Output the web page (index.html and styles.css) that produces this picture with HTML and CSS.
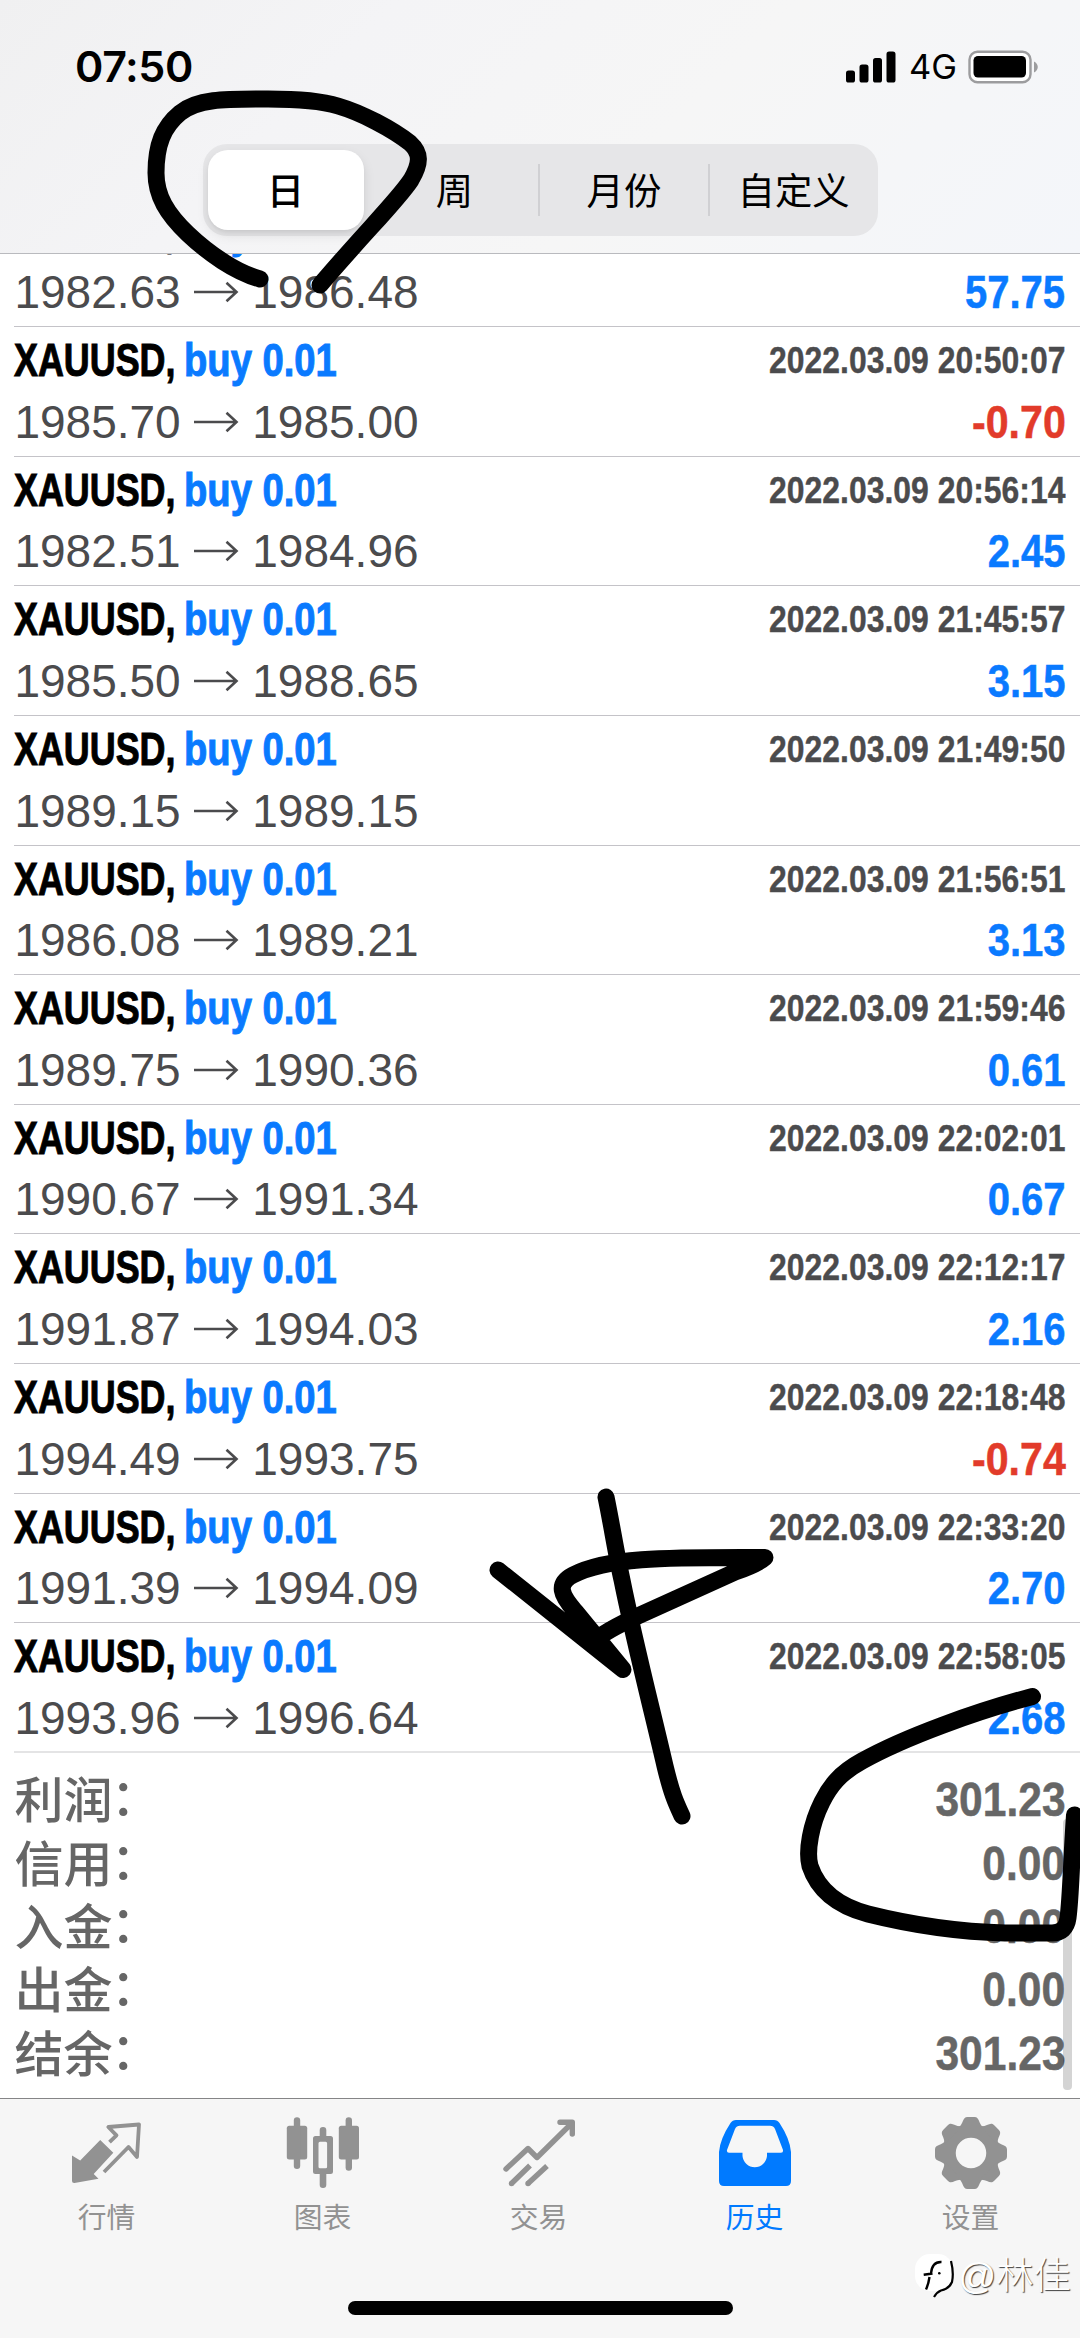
FILE: index.html
```html
<!DOCTYPE html>
<html lang="zh-CN">
<head>
<meta charset="utf-8">
<title>历史</title>
<link rel="stylesheet" href="styles.css">
</head>
<body>
<div class="phone">
  <header class="header">
    <div class="status">
      <span class="clock">07:50</span>
      <div class="status-right">
        <svg class="signal" width="50" height="32" viewBox="0 0 50 32"><rect x="0" y="19.5" width="9" height="12" rx="2.6"/><rect x="13.5" y="13.5" width="9" height="18" rx="2.6"/><rect x="27" y="7" width="9" height="24.500" rx="2.600"/><rect x="40.500" y="0.500" width="9" height="31" rx="2.600"/></svg>
        <span class="network">4G</span>
        <svg class="battery" width="72" height="34" viewBox="0 0 72 34"><rect x="1.500" y="1.800" width="61" height="30.400" rx="8" fill="#fff" stroke="#9c9c9e" stroke-width="2.400"/><rect x="5.500" y="6" width="52.500" height="21.500" rx="4.500"/><path d="M66 11.500c5 2.500 5 8.500 0 11z" fill="#9c9c9e"/></svg>
      </div>
    </div>
    <nav class="segments">
      <span class="segment active">日</span>
      <span class="segment">周</span>
      <span class="segment divided">月份</span>
      <span class="segment divided">自定义</span>
    </nav>
  </header>

  <main class="content">
    <ul class="deals" id="deals"></ul>
    <dl class="summary">
      <div class="sum"><dt>利润<i>：</i></dt><dd>301.23</dd></div>
      <div class="sum"><dt>信用<i>：</i></dt><dd>0.00</dd></div>
      <div class="sum"><dt>入金<i>：</i></dt><dd>0.00</dd></div>
      <div class="sum"><dt>出金<i>：</i></dt><dd>0.00</dd></div>
      <div class="sum"><dt>结余<i>：</i></dt><dd>301.23</dd></div>
    </dl>
    <div class="scrollbar"></div>
  </main>

  <footer class="tabbar">
    <div class="tab">
      <svg width="80" height="80" viewBox="0 0 80 80"><path d="M4 40.500L12.200 45.500 32.200 25 45.300 37.700 25.700 59 30.500 63.700 6.500 68Q4 68.200 4 66z" fill="currentColor"/><path d="M41.500 27.200L48.500 20.300 40.300 12 71 9.500 69 42 60.500 32 36 57" fill="none" stroke="currentColor" stroke-width="3.800" stroke-linejoin="round"/></svg>
      <span>行情</span>
    </div>
    <div class="tab">
      <svg width="80" height="80" viewBox="0 0 80 80"><g fill="currentColor"><rect x="2.800" y="10.700" width="20.400" height="33.800" rx="2.500"/><rect x="9.800" y="2.300" width="6.400" height="51.700" rx="3.200"/><rect x="54.800" y="10.700" width="20.200" height="33.800" rx="2.500"/><rect x="61.600" y="2.300" width="6.400" height="53.400" rx="3.200"/><rect x="35.700" y="12" width="6.600" height="14" rx="3.200"/><rect x="35.700" y="54" width="6.600" height="19" rx="3.200"/><path fill-rule="evenodd" d="M31.500 21h15a2.500 2.500 0 0 1 2.500 2.500v33a2.500 2.500 0 0 1-2.500 2.500h-15a2.500 2.500 0 0 1-2.500-2.500v-33a2.500 2.500 0 0 1 2.500-2.500zM36 26.700q-1.500 0-1.500 1.500v23.600q0 1.500 1.500 1.500h5.600q1.500 0 1.500-1.500V28.200q0-1.500-1.500-1.500z"/></g></svg>
      <span>图表</span>
    </div>
    <div class="tab">
      <svg width="80" height="80" viewBox="0 0 80 80" fill="none" stroke="currentColor" stroke-width="5.400" stroke-linejoin="round"><path d="M6 54L28 33.500 37 42.500 71 9M60 7.300H72.300V19" stroke-linecap="round"/><path d="M11.500 68.500L30 50.500M28 68.500L47 51"/><circle cx="11.500" cy="68.500" r="2.700" fill="currentColor" stroke="none"/><circle cx="28" cy="68.500" r="2.700" fill="currentColor" stroke="none"/></svg>
      <span>交易</span>
    </div>
    <div class="tab current">
      <svg width="80" height="80" viewBox="0 0 80 80"><path fill="currentColor" fill-rule="evenodd" d="M20 5H58Q61.500 5 63.500 8Q74 24 75 37V66Q75 71 70 71H8Q3 71 3 66V37Q4 24 14.500 8Q16.500 5 20 5zM24 10.700Q20.500 10.700 19 14L11 35Q10.500 37.700 13 37.700H26.500V41A12.300 12.300 0 0 0 51 41V37.700H65Q67.500 37.700 67 35L59 14Q57.500 10.700 54 10.700z"/></svg>
      <span>历史</span>
    </div>
    <div class="tab">
      <svg width="80" height="80" viewBox="-39 -38 80 80" fill="currentColor"><defs><path id="tooth" d="M-13 -25C-7 -29-9 -36-3.500 -36H3.500C9 -36 7 -29 13 -25z"/></defs><circle r="22" fill="none" stroke="currentColor" stroke-width="13.500"/><use href="#tooth"/><use href="#tooth" transform="rotate(45)"/><use href="#tooth" transform="rotate(90)"/><use href="#tooth" transform="rotate(135)"/><use href="#tooth" transform="rotate(180)"/><use href="#tooth" transform="rotate(225)"/><use href="#tooth" transform="rotate(270)"/><use href="#tooth" transform="rotate(315)"/></svg>
      <span>设置</span>
    </div>
  </footer>
  <div class="home"></div>

  <div class="watermark">
    <svg width="42" height="50" viewBox="0 0 42 50"><rect x="1" y="3" width="38" height="37" rx="15" fill="#fff"/><path d="M27.500 11Q18 10.500 17 22.500M9.700 23.800L18.500 22.500M15.500 26Q14.500 33 12 38.500" fill="none" stroke="#000" stroke-width="2.400"/><path d="M37 10Q40 22 38 31Q35 38 27 39.500Q23 41 20 46" fill="none" stroke="#000" stroke-width="2.200"/><circle cx="25.300" cy="22.300" r="1.300"/></svg>
    <span>@林佳</span>
  </div>

  <svg class="ink" width="1080" height="2338" viewBox="0 0 1080 2338">
    <path d="M260 279C235 272 208 253 188 234C167 214 156 196 156 173C156 145 163 127 180 113C197 99 222 99 268 99C300 99 322 101 338 106C362 113 392 129 410 143C421 153 421 163 411 180C398 200 365 232 320 285"/>
    <path d="M606 1497C612 1526 616 1553 622 1580C634 1640 652 1710 665 1766C672 1795 676 1803 682 1816"/>
    <path d="M498 1570L623 1669.500L575 1611C561 1595 556 1584 573 1575C605 1558 660 1557 765 1557.500Q758 1564 735 1572L640 1615C620 1624 602 1633 592 1643"/>
    <path d="M1032.500 1696.500C977 1711 905 1737 862 1761C840 1773 830 1786 822 1802C811 1824 806 1851 810 1866C818 1890 838 1906 868 1914C916 1926 965 1932 1005 1933H1052Q1066 1933 1068 1918C1071 1895 1071 1865 1074.500 1815"/>
  </svg>
</div>
<script src="deals.js"></script>
</body>
</html>
```
FILE: deals.js
```js
const deals = [
  ["1982.63", "1986.48", "", "57.75"],
  ["1985.70", "1985.00", "2022.03.09 20:50:07", "-0.70"],
  ["1982.51", "1984.96", "2022.03.09 20:56:14", "2.45"],
  ["1985.50", "1988.65", "2022.03.09 21:45:57", "3.15"],
  ["1989.15", "1989.15", "2022.03.09 21:49:50", ""],
  ["1986.08", "1989.21", "2022.03.09 21:56:51", "3.13"],
  ["1989.75", "1990.36", "2022.03.09 21:59:46", "0.61"],
  ["1990.67", "1991.34", "2022.03.09 22:02:01", "0.67"],
  ["1991.87", "1994.03", "2022.03.09 22:12:17", "2.16"],
  ["1994.49", "1993.75", "2022.03.09 22:18:48", "-0.74"],
  ["1991.39", "1994.09", "2022.03.09 22:33:20", "2.70"],
  ["1993.96", "1996.64", "2022.03.09 22:58:05", "2.68"]
];
document.getElementById("deals").innerHTML = deals.map(([open, close, time, profit]) => `
  <li class="deal">
    <div class="line head">
      <div class="title"><span class="symbol">XAUUSD,</span><span class="side">buy 0.01</span></div>
      <time class="time">${time}</time>
    </div>
    <div class="line">
      <div class="prices"><span>${open}</span><svg class="arrow" width="46" height="22" viewBox="0 0 46 22"><path d="M1 11H43.500M33.500 1.800L43.500 11L33.500 20.200"/></svg><span>${close}</span></div>
      <span class="profit${profit.startsWith("-") ? " loss" : ""}">${profit}</span>
    </div>
  </li>`).join("");
```
FILE: styles.css
```css
* { box-sizing: border-box; }

body {
  margin: 0;
  background: #fff;
  font-family: "Liberation Sans", "Noto Sans CJK SC", sans-serif;
}

.phone {
  position: relative;
  width: 1080px;
  height: 2338px;
  overflow: hidden;
  display: flex;
  flex-direction: column;
}

.header {
  position: relative;
  z-index: 1;
  flex: none;
  height: 254px;
  border-bottom: 1px solid #b9babe;
  background: linear-gradient(135deg, #f0f0f1 0%, #f4f4f6 30%, #f6f6f6 60%, #f4f6fa 100%);
}

.status {
  height: 144px;
  padding: 38px 40px 0 75px;
  display: flex;
  justify-content: space-between;
  font-family: Inter, sans-serif;
}

.clock {
  font-size: 43px;
  font-weight: 600;
  line-height: 56px;
  letter-spacing: -0.4px;
}

.status-right {
  display: flex;
  height: 57px;
  align-items: center;
}

.network {
  margin: 0 11px 0 13px;
  font-size: 34.500px;
  font-weight: 400;
  line-height: 40px;
}

.segments {
  width: 675px;
  height: 92px;
  margin-left: 202.500px;
  padding: 6px 0 6px 5px;
  display: flex;
  align-items: center;
  border-radius: 24px;
  background: #e6e6e8;
}

.segment {
  flex: 1;
  height: 52px;
  display: flex;
  align-items: center;
  justify-content: center;
  padding-bottom: 2px;
  font: 400 37.400px/52px "Noto Sans CJK SC", sans-serif;
  color: #000;
}

.segment.divided { border-left: 2px solid #d0d0d3; }

.segment.active {
  flex: none;
  width: 156px;
  height: 80px;
  margin-right: 7px;
  border-radius: 20px;
  background: #fff;
  font-weight: 500;
  box-shadow: 0 5px 12px rgba(0, 0, 0, .1), 0 2px 3px rgba(0, 0, 0, .04);
}

.content {
  position: relative;
  height: 1844px;
  flex: none;
}

.deals {
  margin: -56.300px 0 0;
  padding: 0;
  list-style: none;
}

.deal {
  height: 129.600px;
  margin-left: 14.400px;
  padding: 5px 14.400px 0 0;
  border-bottom: 1px solid #c4c3c8;
}

.deal:last-child { border-bottom: 2px solid #e4e4e5; }

.line {
  height: 61.500px;
  display: flex;
  justify-content: space-between;
  font-size: 46px;
  line-height: 56px;
  color: #4b4b4d;
  white-space: nowrap;
}

.title {
  display: flex;
  font-weight: 700;
}

.symbol,
.side {
  width: 169.500px;
  transform: scaleX(.78);
  transform-origin: 0 50%;
  color: #000;
  -webkit-text-stroke: 1px currentColor;
}

.side {
  transform: scaleX(.83);
  color: #0a7aff;
}

.time {
  font-size: 37.440px;
  font-weight: 700;
  line-height: 56px;
  transform: scaleX(.853);
  transform-origin: 100% 50%;
  -webkit-text-stroke: .4px currentColor;
}

.prices {
  display: flex;
  align-items: center;
  height: 56px;
  gap: 12.800px;
}

.arrow {
  display: block;
  fill: none;
  stroke: #4b4b4d;
  stroke-width: 2.600px;
}

.profit {
  font-weight: 700;
  color: #0a7aff;
  transform: scaleX(.87);
  transform-origin: 100% 50%;
  -webkit-text-stroke: .5px currentColor;
}

.profit.loss {
  color: #e23b2a;
  transform: scaleX(.895);
}

.summary {
  margin: 0;
  padding: 12.500px 14.400px 0;
}

.sum {
  height: 63.360px;
  display: flex;
  justify-content: space-between;
  color: #666;
}

.sum dt {
  font: 500 49px/63.360px "Noto Sans CJK SC", sans-serif;
}

.sum i {
  font-style: normal;
  position: relative;
  left: -1.500px;
  top: -3px;
}

.sum dd {
  margin: 0;
  font-size: 48.900px;
  font-weight: 700;
  line-height: 68px;
  transform: scaleX(.87);
  transform-origin: 100% 50%;
  -webkit-text-stroke: .5px currentColor;
}

.scrollbar {
  position: absolute;
  right: 8.500px;
  bottom: 8px;
  width: 8.500px;
  height: 271px;
  border-radius: 4px;
  background: rgba(0, 0, 0, .17);
}

.tabbar {
  flex: 1;
  display: flex;
  padding-top: 16px;
  border-top: 1px solid #858587;
  background: #f6f6f6;
}

.tab {
  width: 216px;
  display: flex;
  flex-direction: column;
  align-items: center;
  color: #929292;
}

.tab svg { display: block; flex: none; }

.tab span {
  margin: 1px 3px 0 0;
  font: 400 28.800px/40px "Noto Sans CJK SC", sans-serif;
}

.tab.current { color: #007aff; }

.home {
  position: absolute;
  left: 347.500px;
  bottom: 23px;
  width: 385.500px;
  height: 14.400px;
  border-radius: 7.200px;
  background: #000;
}

.watermark {
  position: absolute;
  right: 9px;
  bottom: 36px;
  display: flex;
  align-items: center;
  gap: 2px;
  color: #fff;
  font: 300 37.400px/52px "Liberation Sans", "Noto Sans CJK SC", sans-serif;
  text-shadow: 1px 1px 1px rgba(0, 0, 0, .75);
}

.ink {
  position: absolute;
  inset: 0;
  z-index: 2;
  fill: none;
  stroke: #000;
  stroke-width: 17px;
  stroke-linecap: round;
  stroke-linejoin: round;
}
```
